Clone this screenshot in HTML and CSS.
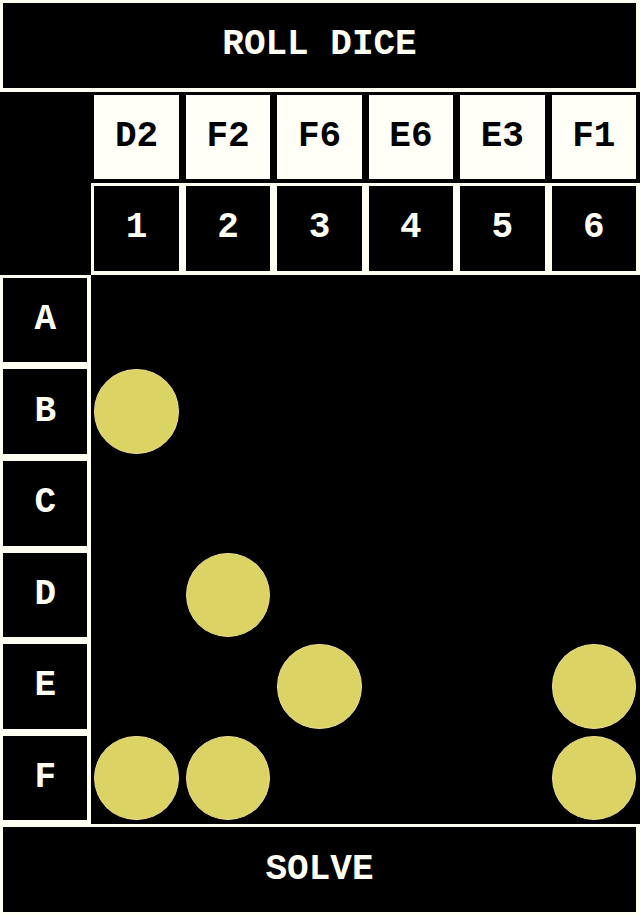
FILE: index.html
```html
<!DOCTYPE html>
<html lang="en">
<head>
<meta charset="utf-8">
<meta name="viewport" content="width=device-width, initial-scale=1">
<title>Dice board</title>
<link rel="stylesheet" href="styles.css">
</head>
<body>
<main class="game">
  <button class="cell wide" type="button">ROLL DICE</button>
  <div class="row">
    <span></span>
    <span class="cell die">D2</span>
    <span class="cell die">F2</span>
    <span class="cell die">F6</span>
    <span class="cell die">E6</span>
    <span class="cell die">E3</span>
    <span class="cell die">F1</span>
  </div>
  <div class="row">
    <span></span>
    <button class="cell" type="button">1</button>
    <button class="cell" type="button">2</button>
    <button class="cell" type="button">3</button>
    <button class="cell" type="button">4</button>
    <button class="cell" type="button">5</button>
    <button class="cell" type="button">6</button>
  </div>
  <div class="row">
    <button class="cell" type="button">A</button>
  </div>
  <div class="row">
    <button class="cell" type="button">B</button>
    <span class="disc"></span>
  </div>
  <div class="row">
    <button class="cell" type="button">C</button>
  </div>
  <div class="row">
    <button class="cell" type="button">D</button>
    <span></span>
    <span class="disc"></span>
  </div>
  <div class="row">
    <button class="cell" type="button">E</button>
    <span></span>
    <span></span>
    <span class="disc"></span>
    <span></span>
    <span></span>
    <span class="disc"></span>
  </div>
  <div class="row">
    <button class="cell" type="button">F</button>
    <span class="disc"></span>
    <span class="disc"></span>
    <span></span>
    <span></span>
    <span></span>
    <span class="disc"></span>
  </div>
  <button class="cell wide" type="button">SOLVE</button>
</main>
</body>
</html>
```
FILE: styles.css
```css
* {
  box-sizing: border-box;
}

body {
  margin: 0;
  background: #000;
  color: #fffff4;
  font: bold 36px/40px "Liberation Mono", monospace;
}

.game {
  display: grid;
  grid-template-rows: repeat(10, minmax(0, 1fr));
  min-height: 100vh;
}

.row {
  display: grid;
  grid-template-columns: repeat(7, minmax(0, 1fr));
}

.cell {
  display: flex;
  align-items: center;
  justify-content: center;
  margin: 0;
  padding: 0;
  border: solid #fffff4;
  border-width: 3px 4px 4px 3px;
  border-radius: 0;
  background: #000;
  color: inherit;
  font: inherit;
}

.die {
  border-color: #000;
  background: #fffff8;
  color: #000;
}

.disc {
  margin: 3px 4px 4px 3px;
  border: 1px solid #eadb91;
  border-radius: 50%;
  background: #dbd364;
}
```
